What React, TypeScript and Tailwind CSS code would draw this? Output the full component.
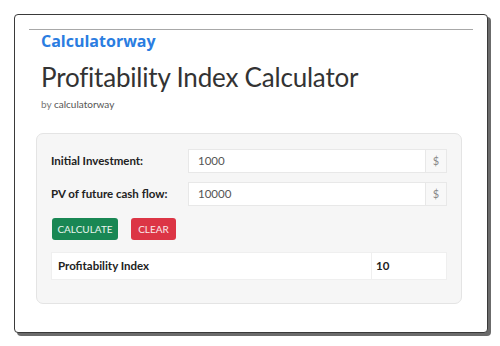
export default function App() {
  return (
    <div className="h-[346px] w-[500px] bg-white pl-[14px] pt-[14px]" style={{ fontFamily: "Lato, 'Noto Sans', sans-serif" }}>
      <div className="h-[319px] w-[474px] rounded-[4px] border border-[#3a3a3a] bg-white shadow-[3px_3px_0_#6b6b6b]">
        <div className="mx-[14px] mt-[14px] border-t border-[#a8a8a8] pl-[12px] pr-[10px]">
          <div className="mt-[1px] text-[16px] font-bold leading-[20px] text-[#2a7de1]" style={{ fontFamily: "'Open Sans', sans-serif" }}>
            Calculatorway
          </div>
          <h1 className="mt-[10px] text-[26px] leading-[32px] tracking-[-0.2px] text-[#333]">Profitability Index Calculator</h1>
          <div className="mt-[4px] text-[10px] text-[#777]">
            by <span className="text-[#555]">calculatorway</span>
          </div>
          <div className="ml-[-5px] mt-[21px] h-[171px] w-[426px] rounded-[7px] border border-[#e4e4e4] bg-[#f6f6f6] px-[14px] pt-[15px]">
            <div className="flex items-center">
              <label className="w-[137px] text-[11.5px] font-bold text-[#222]">Initial Investment:</label>
              <div className="flex h-[24px] flex-1 border border-[#e8e8e8] bg-white">
                <div className="flex flex-1 items-center pl-[9px] text-[11.5px] text-[#555]">1000</div>
                <div className="flex w-[21px] items-center justify-center border-l border-[#e8e8e8] bg-[#f8f8f8] text-[11px] text-[#888]">$</div>
              </div>
            </div>
            <div className="mt-[9px] flex items-center">
              <label className="w-[137px] text-[11.5px] font-bold text-[#222]">PV of future cash flow:</label>
              <div className="flex h-[24px] flex-1 border border-[#e8e8e8] bg-white">
                <div className="flex flex-1 items-center pl-[9px] text-[11.5px] text-[#555]">10000</div>
                <div className="flex w-[21px] items-center justify-center border-l border-[#e8e8e8] bg-[#f8f8f8] text-[11px] text-[#888]">$</div>
              </div>
            </div>
            <div className="mt-[12px] flex gap-[13px] pl-[1px]">
              <button className="h-[22px] w-[66px] rounded-[3px] bg-[#198754] text-[10px] text-[#e8f5ee]">CALCULATE</button>
              <button className="h-[22px] w-[45px] rounded-[3px] bg-[#dc3545] text-[10px] text-[#fbe9eb]">CLEAR</button>
            </div>
            <div className="mt-[12px] flex h-[28px] border border-[#efefef] bg-white">
              <div className="flex flex-1 items-center pl-[6px] text-[11.5px] font-bold text-[#222]">Profitability Index</div>
              <div className="flex w-[75px] items-center border-l border-[#efefef] pl-[4px] text-[11.5px] font-bold text-[#222]">10</div>
            </div>
          </div>
        </div>
      </div>
    </div>
  );
}
